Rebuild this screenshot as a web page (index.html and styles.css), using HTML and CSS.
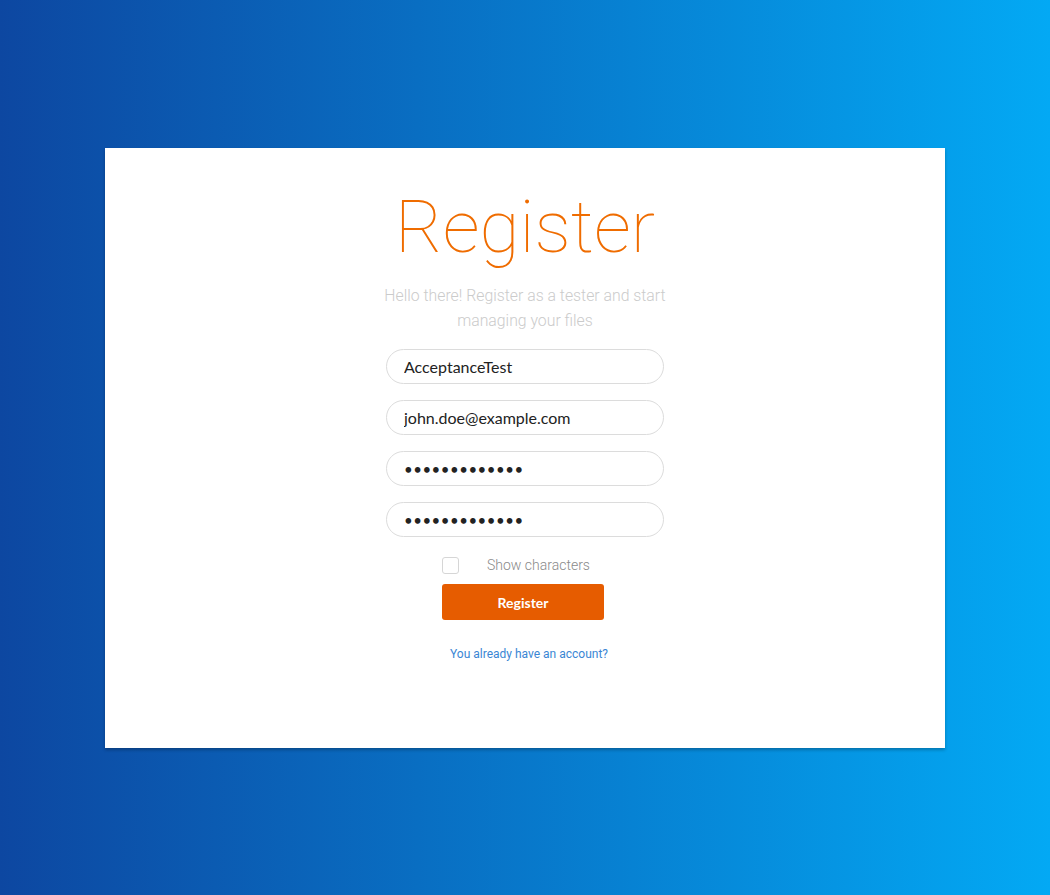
FILE: index.html
```html
<!DOCTYPE html>
<html lang="en">
<head>
<meta charset="utf-8">
<title>Register</title>
<link rel="stylesheet" href="styles.css">
</head>
<body>
<div class="page">
  <div class="card">
    <form class="form">
      <h1 class="title">Register</h1>
      <p class="subtitle">Hello there! Register as a tester and start managing your files</p>
      <input class="field" type="text" value="AcceptanceTest">
      <input class="field" type="text" value="john.doe@example.com">
      <input class="field pw" type="password" value="acceptance123">
      <input class="field pw" type="password" value="acceptance123">
      <div class="actions">
        <label class="show">
          <span class="box"></span>
          <span class="show-text">Show characters</span>
        </label>
        <button class="btn" type="button">Register</button>
      </div>
      <a class="link" href="#">You already have an account?</a>
    </form>
  </div>
</div>
</body>
</html>
```

FILE: styles.css
```css
* { box-sizing: border-box; }
html, body { margin: 0; padding: 0; }
body {
  width: 1050px;
  height: 895px;
  background: linear-gradient(to right, #0d47a1 0%, #03a9f4 100%);
  font-family: Roboto, "Noto Sans", sans-serif;
}
.page {
  height: 895px;
  display: flex;
  align-items: center;
  justify-content: center;
}
.card {
  width: 840px;
  height: 600px;
  margin-top: 1px;
  background: #fff;
  box-shadow: 0 2px 3px rgba(0, 0, 0, 0.25);
  display: flex;
  justify-content: center;
  padding-top: 39px;
}
.form {
  width: 278px;
  display: flex;
  flex-direction: column;
  align-items: stretch;
}
.title {
  margin: 0 -20px;
  font-family: Roboto, sans-serif;
  font-weight: 100;
  font-size: 73px;
  line-height: 80px;
  color: #ef6c00;
  text-align: center;
  letter-spacing: 0;
}
.subtitle {
  margin: 16px -4px 16px;
  font-family: Roboto, sans-serif;
  font-weight: 300;
  font-size: 15.8px;
  line-height: 25px;
  color: #cbcbcb;
  text-align: center;
}
.field {
  display: block;
  width: 278px;
  height: 35px;
  margin: 0 0 16px;
  padding: 0 17px;
  border: 1px solid #dcdcdc;
  border-radius: 18px;
  background: #fff;
  font-family: Lato, sans-serif;
  font-size: 16px;
  color: #222;
  outline: none;
}
.field.pw {
  font-size: 15px;
  letter-spacing: 0.5px;
}
.actions {
  display: flex;
  flex-direction: column;
  align-items: flex-start;
  padding-left: 56px;
  margin-top: 4px;
}
.show {
  display: flex;
  align-items: center;
  height: 17px;
}
.box {
  width: 17px;
  height: 17px;
  border: 1px solid #d6d6d6;
  border-radius: 3px;
  background: #fff;
}
.show-text {
  margin-left: 28px;
  margin-top: -2px;
  font-family: Roboto, sans-serif;
  font-weight: 300;
  font-size: 14px;
  color: #8a8a8a;
}
.btn {
  margin-top: 10px;
  width: 162px;
  height: 36px;
  border: none;
  border-radius: 3px;
  background: #e65c00;
  color: #fff;
  font-family: Lato, sans-serif;
  font-weight: 700;
  font-size: 14px;
  cursor: pointer;
}
.link {
  margin-top: 27px;
  margin-left: 8px;
  text-align: center;
  font-family: Roboto, sans-serif;
  font-size: 12px;
  color: #3a86d4;
  text-decoration: none;
}
```
